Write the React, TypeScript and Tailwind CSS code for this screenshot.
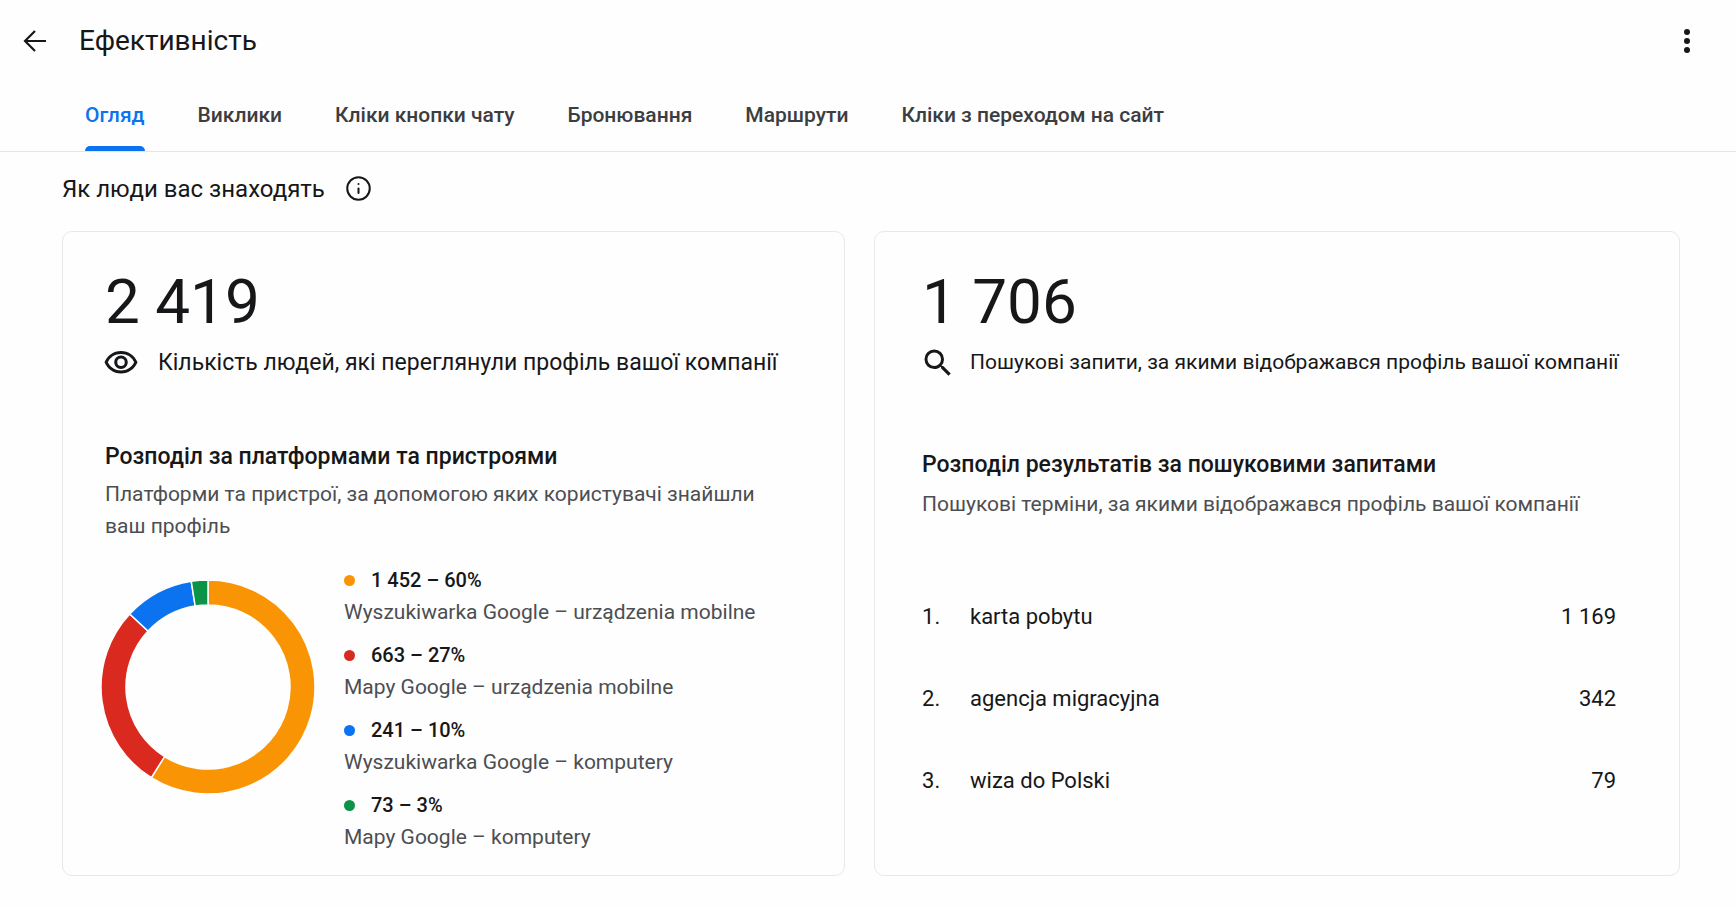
import React from "react";
import { Info } from "lucide-react";
import { MdOutlineVisibility, MdSearch } from "react-icons/md";

const tabs = [
  "Огляд",
  "Виклики",
  "Кліки кнопки чату",
  "Бронювання",
  "Маршрути",
  "Кліки з переходом на сайт",
];

// from / to are degrees, clockwise from the top of the ring
const platforms = [
  { value: "1 452 – 60%", label: "Wyszukiwarka Google – urządzenia mobilne", color: "#f99505", from: 0, to: 212 },
  { value: "663 – 27%", label: "Mapy Google – urządzenia mobilne", color: "#da2a20", from: 212, to: 313 },
  { value: "241 – 10%", label: "Wyszukiwarka Google – komputery", color: "#0b73ef", from: 313, to: 351 },
  { value: "73 – 3%", label: "Mapy Google – komputery", color: "#0b9347", from: 351, to: 360 },
];

const queries = [
  { term: "karta pobytu", count: "1 169" },
  { term: "agencja migracyjna", count: "342" },
  { term: "wiza do Polski", count: "79" },
];

const point = (radius: number, degrees: number) => {
  const a = (degrees * Math.PI) / 180;
  return `${107 + radius * Math.sin(a)} ${107 - radius * Math.cos(a)}`;
};

const slicePath = (from: number, to: number) => {
  const large = to - from > 180 ? 1 : 0;
  return `M${point(107, from)} A107 107 0 ${large} 1 ${point(107, to)} L${point(82, to)} A82 82 0 ${large} 0 ${point(82, from)} Z`;
};

const Donut: React.FC = () => (
  <svg className="mt-4 h-[214px] w-[214px] shrink-0" viewBox="0 0 214 214" aria-hidden="true">
    {platforms.map((p) => (
      <path key={p.label} d={slicePath(p.from, p.to)} fill={p.color} stroke="#fefefe" strokeWidth="1.5" />
    ))}
  </svg>
);

const Header: React.FC = () => (
  <header className="border-b border-[#e4e5e7]">
    <div className="flex h-[82px] items-center pl-[19px] pr-[33px]">
      <button type="button" aria-label="Назад">
        <svg className="h-8 w-8" viewBox="0 0 32 32" fill="none" stroke="currentColor" strokeWidth="2.2">
          <path d="M27 16H6M16 6L6 16l10 10" />
        </svg>
      </button>
      <h1 className="ml-7 text-[28px] leading-9">Ефективність</h1>
      <button type="button" aria-label="Меню" className="ml-auto">
        <svg className="h-8 w-8" viewBox="0 0 32 32" fill="currentColor">
          <circle cx="16" cy="7" r="3" />
          <circle cx="16" cy="16" r="3" />
          <circle cx="16" cy="25" r="3" />
        </svg>
      </button>
    </div>
    <nav className="flex h-[69px] gap-[53px] pl-[85px] text-[21px] font-medium leading-7 text-[#3c3d41]">
      {tabs.map((tab, i) => (
        <button
          key={tab}
          type="button"
          className={i === 0 ? "flex flex-col justify-between pt-[19px] text-[#0b73ef]" : "flex flex-col justify-between pt-[19px]"}
        >
          {tab}
          {i === 0 && <span className="h-[5px] w-full rounded-t-md bg-[#0b73ef]" />}
        </button>
      ))}
    </nav>
  </header>
);

const App: React.FC = () => {
  return (
    <div className="min-h-screen bg-[#fefefe] font-['Roboto',sans-serif] text-[#161719]">
      <Header />
      <main className="pb-8 pl-[62px] pr-14">
        <div className="flex h-[79px] items-center gap-5 pb-1.5">
          <h2 className="text-2xl">Як люди вас знаходять</h2>
          <Info size={27} strokeWidth={1.8} />
        </div>

        <div className="grid grid-cols-[minmax(0,783fr)_minmax(0,806fr)] gap-[29px]">
          <section className="rounded-[10px] border border-[#e8e8ea] pb-[22px] pl-[42px] pr-16 pt-[38px]">
            <p className="text-[62px] leading-[64px]">2 419</p>
            <div className="-ml-0.5 mt-[11px] flex h-9 items-center gap-[19px]">
              <MdOutlineVisibility size={36} className="shrink-0" />
              <p className="whitespace-nowrap text-[23px]">Кількість людей, які переглянули профіль вашої компанії</p>
            </div>
            <h3 className="mt-[60px] text-[23px] font-medium leading-8">Розподіл за платформами та пристроями</h3>
            <p className="mt-[5px] text-[21px] leading-8 text-[#4c4e52]">
              Платформи та пристрої, за допомогою яких користувачі знайшли ваш профіль
            </p>
            <div className="-ml-1 mt-[22px] flex gap-[29px]">
              <Donut />
              <ul className="flex flex-col gap-[11px]">
                {platforms.map((p) => (
                  <li key={p.label}>
                    <div className="flex items-center gap-4 text-xl font-medium leading-8">
                      <span className="h-[11px] w-[11px] rounded-full" style={{ backgroundColor: p.color }} />
                      {p.value}
                    </div>
                    <p className="text-[21px] leading-8 text-[#4c4e52]">{p.label}</p>
                  </li>
                ))}
              </ul>
            </div>
          </section>

          <section className="rounded-[10px] border border-[#e8e8ea] pl-[47px] pr-[46px] pt-[38px]">
            <p className="text-[62px] leading-[64px]">1 706</p>
            <div className="-ml-0.5 mt-[11px] flex h-9 items-center gap-[14px]">
              <MdSearch size={36} className="shrink-0" />
              <p className="whitespace-nowrap text-[21px]">Пошукові запити, за якими відображався профіль вашої компанії</p>
            </div>
            <h3 className="mt-[68px] text-[23px] font-medium leading-8">Розподіл результатів за пошуковими запитами</h3>
            <p className="mt-[7px] text-[21px] leading-8 text-[#4c4e52]">
              Пошукові терміни, за якими відображався профіль вашої компанії
            </p>
            <ol className="mt-[55px] pr-[17px] text-[22px]">
              {queries.map((q, i) => (
                <li key={q.term} className="flex h-[82px] items-center">
                  <span className="w-12">{i + 1}.</span>
                  <span>{q.term}</span>
                  <span className="ml-auto">{q.count}</span>
                </li>
              ))}
            </ol>
          </section>
        </div>
      </main>
    </div>
  );
};

export default App;
